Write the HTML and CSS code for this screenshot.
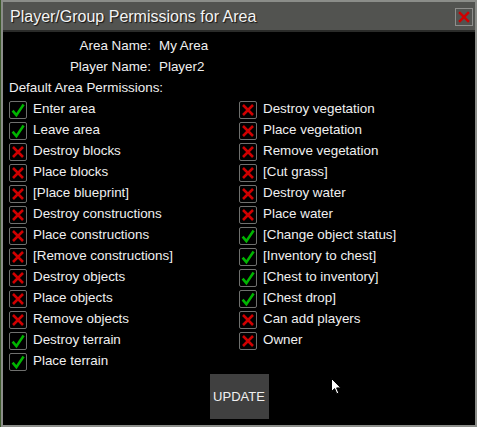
FILE: index.html
```html
<!DOCTYPE html>
<html>
<head>
<meta charset="utf-8">
<link rel="stylesheet" href="styles.css">
</head>
<body>
<div class="dialog">
  <div class="titlebar">
    <span class="title">Player/Group Permissions for Area</span>
    <span class="close"><svg viewBox="0 0 18 18" width="16" height="16"><path d="M3.5 3.5 L14.5 14.5 M14.5 3.5 L3.5 14.5" stroke="#d00000" stroke-width="2.8" fill="none"/></svg></span>
  </div>
  <div class="content">
    <div class="info">
      <span class="label">Area Name:</span><span class="value">My Area</span>
      <span class="label">Player Name:</span><span class="value">Player2</span>
    </div>
    <div class="row heading">Default Area Permissions:</div>
    <div class="perms">
      <div class="perm"><span class="box yes"></span>Enter area</div>
      <div class="perm"><span class="box no"></span>Destroy vegetation</div>
      <div class="perm"><span class="box yes"></span>Leave area</div>
      <div class="perm"><span class="box no"></span>Place vegetation</div>
      <div class="perm"><span class="box no"></span>Destroy blocks</div>
      <div class="perm"><span class="box no"></span>Remove vegetation</div>
      <div class="perm"><span class="box no"></span>Place blocks</div>
      <div class="perm"><span class="box no"></span>[Cut grass]</div>
      <div class="perm"><span class="box no"></span>[Place blueprint]</div>
      <div class="perm"><span class="box no"></span>Destroy water</div>
      <div class="perm"><span class="box no"></span>Destroy constructions</div>
      <div class="perm"><span class="box no"></span>Place water</div>
      <div class="perm"><span class="box no"></span>Place constructions</div>
      <div class="perm"><span class="box yes"></span>[Change object status]</div>
      <div class="perm"><span class="box no"></span>[Remove constructions]</div>
      <div class="perm"><span class="box yes"></span>[Inventory to chest]</div>
      <div class="perm"><span class="box no"></span>Destroy objects</div>
      <div class="perm"><span class="box yes"></span>[Chest to inventory]</div>
      <div class="perm"><span class="box no"></span>Place objects</div>
      <div class="perm"><span class="box yes"></span>[Chest drop]</div>
      <div class="perm"><span class="box no"></span>Remove objects</div>
      <div class="perm"><span class="box no"></span>Can add players</div>
      <div class="perm"><span class="box yes"></span>Destroy terrain</div>
      <div class="perm"><span class="box no"></span>Owner</div>
      <div class="perm"><span class="box yes"></span>Place terrain</div>
    </div>
    <div class="actions"><button class="update">UPDATE</button></div>
  </div>
  <svg class="cursor" viewBox="0 0 11 17" width="11" height="17"><path d="M0.5 0.5 L0.5 13.5 L3.6 10.6 L5.8 15.8 L7.8 15 L5.6 9.9 L9.8 9.9 Z" fill="#fff" stroke="#000" stroke-width="1"/></svg>
</div>
</body>
</html>
```
FILE: styles.css
```css
html, body {
  margin: 0;
  padding: 0;
}
body {
  width: 477px;
  height: 427px;
  background: #3d5a2c;
  font-family: "Liberation Sans", Arial, sans-serif;
  overflow: hidden;
}
.dialog {
  position: relative;
  margin-left: 1px;
  width: 472px;
  height: 423px;
  border: 2px solid #8b8d89;
  background: #000;
  display: flex;
  flex-direction: column;
}
.titlebar {
  height: 28px;
  background: #525350;
  border-bottom: 2px solid #2a2b29;
  display: flex;
  align-items: center;
  justify-content: space-between;
  padding: 0 2px 0 7px;
}
.title {
  color: #f4f4f4;
  font-size: 16px;
  text-shadow: 1px 1px 1px #111;
  margin-top: 1px;
}
.close {
  width: 16px;
  height: 16px;
  border: 1px solid #8e8e8c;
  display: flex;
  align-items: center;
  justify-content: center;
  margin-top: 2px;
}
.content {
  padding: 3px 0 0 6px;
  color: #f0f0f0;
  font-size: 13.4px;
  line-height: 21px;
}
.info {
  display: grid;
  grid-template-columns: 142px auto;
  column-gap: 8px;
}
.label {
  text-align: right;
}
.perms {
  display: grid;
  grid-template-columns: 230px 230px;
}
.perm {
  display: flex;
  align-items: flex-start;
  height: 21px;
}
.box {
  width: 16px;
  height: 16px;
  border: 1px solid #6f706e;
  border-radius: 2px;
  margin-top: 3px;
  margin-right: 6px;
  flex: none;
  background-repeat: no-repeat;
  background-position: center;
}
.yes {
  background-image: url("data:image/svg+xml,%3Csvg xmlns='http://www.w3.org/2000/svg' viewBox='0 0 16 16' width='16' height='16'%3E%3Cpath d='M2.6 8.6 L6.4 13.2 L13.6 2.6' stroke='%2300b400' stroke-width='2.6' fill='none'/%3E%3C/svg%3E");
}
.no {
  background-image: url("data:image/svg+xml,%3Csvg xmlns='http://www.w3.org/2000/svg' viewBox='0 0 16 16' width='16' height='16'%3E%3Cpath d='M3 3 L13 13 M13 3 L3 13' stroke='%23d00000' stroke-width='2.6' fill='none'/%3E%3C/svg%3E");
}
.actions {
  display: flex;
  justify-content: center;
  padding-right: 6px;
  margin-top: 3px;
}
.update {
  width: 59px;
  height: 45px;
  background: #404040;
  border: none;
  color: #f0f0f0;
  font-family: "Liberation Sans", Arial, sans-serif;
  font-size: 13px;
  padding: 0;
}
.cursor {
  position: absolute;
  left: 328px;
  top: 376px;
}
```
